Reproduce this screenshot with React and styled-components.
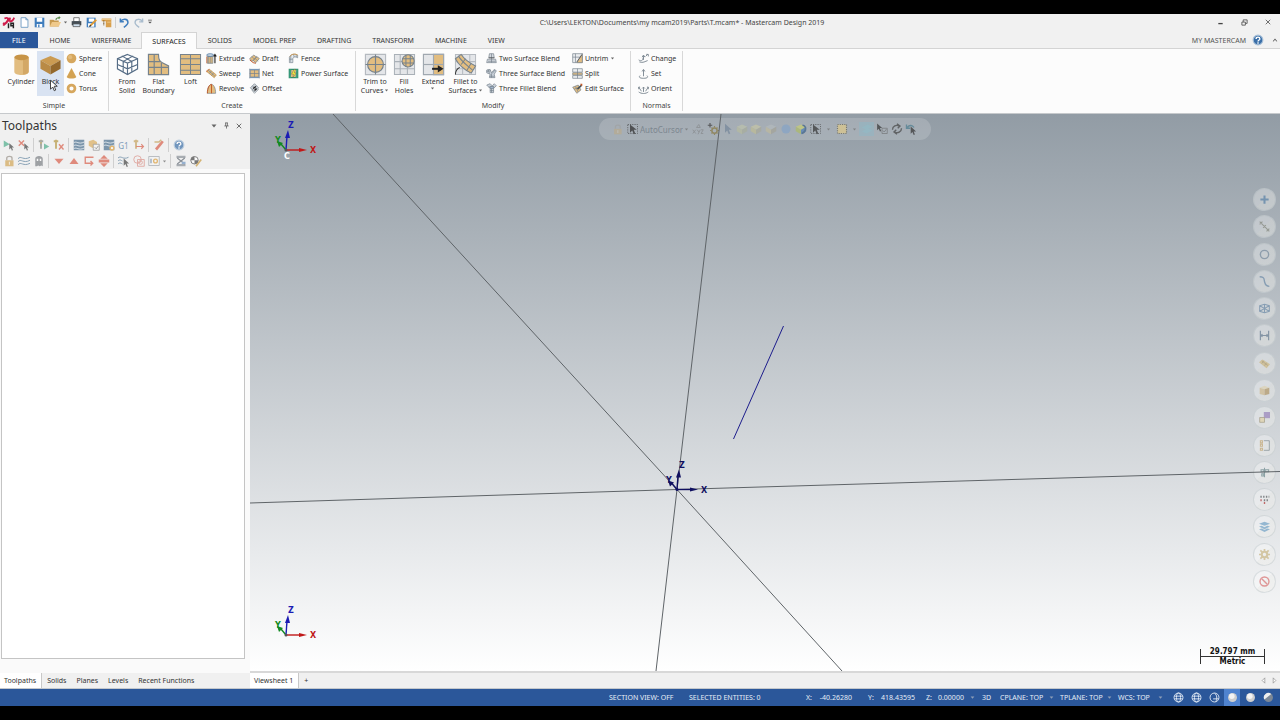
import React from "react";
import styled, { createGlobalStyle, css } from "styled-components";

const GlobalStyle = createGlobalStyle`
  *, *::before, *::after { box-sizing: border-box; }
  body { margin: 0; background: #000; }
  button, select { font: inherit; color: inherit; background: none; border: 0; padding: 0; margin: 0; }
  svg { display: block; flex: none; }
`;

/* ---------- icon drawings, all on a 16 x 16 grid ---------- */

const T = "#e2bd80";
const TD = "#bd8a3e";
const G = "#76828c";
const GL = "#e4e6e9";
const B = "#3f6c9c";

const cursorPath = "M2 1v12l3-3 2 5 2-1-2-5h4z";
const cubeSolid = (a, b, c) => (
  <>
    <path fill={a} d="M8 2l7 3-7 4-7-4z" />
    <path fill={b} d="M1 5l7 4v6l-7-4z" />
    <path fill={c} d="M15 5L8 9v6l7-4z" />
  </>
);

const glyphs = {
  app: (
    <>
      <path fill="none" stroke="#d01c4a" strokeWidth="2.2" d="M1 9c3 1 6-2 7-7M3 3c4-2 5 0 4 3s-5 4-5 6M9 7c3 0 5-2 6-5M10 2l-1 5" />
      <path stroke="#222" strokeWidth="1.8" fill="none" d="M8 9v6M14 15V9h-3v3h3" />
    </>
  ),
  page: <path fill="#fff" stroke="#6f9cc4" strokeWidth="1.3" d="M3 1h7l3 3v11H3zM10 1v3h3" />,
  save: (
    <>
      <path fill="#3f7dbd" d="M1 1h14v14H1z" />
      <path fill="#fff" d="M4 1h8v6H4zM4 10h8v5H4z" />
      <path fill="#3f7dbd" d="M6 11h2v4H6z" />
    </>
  ),
  open: (
    <>
      <path fill="#c79a50" d="M1 5h5l1 1h6v8H1z" />
      <path fill="#efc98b" d="M4 8h12l-3 6H1z" />
      <path fill="none" stroke="#5c8a4a" strokeWidth="1.5" d="M9 5c1-3 3-3 5-3l-1-1m1 1l-1 2" />
    </>
  ),
  print: (
    <>
      <path fill="#fff" stroke="#444" d="M4 1h8v6H4z" />
      <path fill="#444d55" d="M1 6h14v6H1z" />
      <path fill="#cfe0ef" stroke="#444" d="M3 10h10v4H3z" />
    </>
  ),
  saveAs: (
    <>
      <path fill="#3f7dbd" d="M1 1h13v14H1z" />
      <path fill="#fff" d="M4 2h8v5H4zM3 9h9v5H3z" />
      <path stroke="#e09a32" strokeWidth="2.6" d="M6 13l9-9" />
      <path stroke="#333" strokeWidth="2" d="M5 14l2-2" />
    </>
  ),
  zip: (
    <>
      <path fill="#d9a04c" d="M1 2h14v4H1zM7 6h8v9H7z" />
      <path fill="#f0cf98" d="M1 3h14v1H1zM9 7h5v1H9z" />
      <path stroke="#7b5a28" strokeDasharray="1 1" strokeWidth="2" d="M4 5v7" />
    </>
  ),
  undo: <path fill="none" stroke="#3f7dbd" strokeWidth="2.2" d="M2 2v5h5M2 7c3-5 11-5 11 1 0 3-3 5-6 7" />,
  redo: <path fill="none" stroke="#a9bccd" strokeWidth="2" d="M14 2v5H9M14 7C11 2 3 2 3 8c0 3 3 5 6 7" />,
  cylinder: (
    <>
      <path fill={T} d="M3 3v10c0 3 10 3 10 0V3z" />
      <path fill="#d3a866" d="M9 4v11c2 0 4-1 4-2V3z" />
      <ellipse cx="8" cy="3" rx="5" ry="2" fill="#c79447" />
    </>
  ),
  block: cubeSolid("#cb9b52", "#b98a45", "#94682c"),
  sphere: (
    <>
      <circle cx="8" cy="8" r="7" fill="#d6a75e" />
      <circle cx="6" cy="6" r="3" fill="#e3bb7c" />
    </>
  ),
  cone: <path fill="#d3a252" d="M8 0l7 13c-2 3-12 3-14 0z" />,
  torus: <circle cx="8" cy="8" r="5" fill="none" stroke="#d6a75e" strokeWidth="4" />,
  solid: (
    <g fill="#fff" stroke="#566d86" strokeWidth=".8">
      <path d="M8 1l7 3v7l-7 4-7-4V4z" />
      <path fill="none" d="M1 4l7 3 7-3M8 7v8M1 8l7 3 7-3M4 2l7 4v7M12 2L5 6v7" />
    </g>
  ),
  flat: (
    <g stroke={G} strokeWidth=".8">
      <path fill={T} d="M1 1h7c0 4 1 5 3 6l4 2v6H1z" />
      <path fill="none" d="M5 1v14M1 6h8M1 10h14M10 7v8" />
    </g>
  ),
  loft: (
    <g stroke={G} strokeWidth=".7">
      <path fill={T} d="M1 1h14v14H1z" />
      <path fill="none" d="M1 4h14M1 8h14M1 12h14M8 1v14" />
    </g>
  ),
  extrude: (
    <>
      <path fill={T} stroke={G} d="M2 5h8v10H2zM4 5v10M7 5v10" />
      <ellipse cx="6" cy="3" rx="5" ry="2" fill="#cbd7e2" stroke={B} />
      <path stroke="#222" strokeWidth="1.6" fill="none" d="M13 15V3M11 5l2-3 2 3" />
      <path stroke="#c45a28" d="M1 5v10" />
    </>
  ),
  sweep: (
    <>
      <path fill={T} stroke={TD} d="M1 5l4-3 10 8-3 4z" />
      <path stroke={G} d="M3 3l10 9M5 8l3-4M8 11l3-4" />
      <path fill="none" stroke="#c45a28" d="M1 6c0-3 2-4 4-4" />
    </>
  ),
  revolve: (
    <>
      <path fill={T} stroke={G} d="M2 15C2 7 5 2 8 2s6 5 6 13z" />
      <path fill="none" stroke="#c45a28" strokeWidth="1.4" d="M2 15C2 7 5 2 8 2v13" />
    </>
  ),
  draft: (
    <>
      <path fill={T} stroke={G} d="M1 8l6-5 4 3-6 6zM6 11l5-6 4 3-5 6z" />
      <path stroke={G} d="M4 5l4 4M9 8l4 4" />
      <path fill="none" stroke="#c45a28" strokeWidth="1.4" d="M1 10l5 4 4 1" />
    </>
  ),
  net: (
    <g stroke={G}>
      <path fill={T} d="M2 3h12v10H2z" />
      <path fill="none" d="M1 1v14M15 1v14M8 3v10M1 8h14" />
      <path stroke={B} d="M1 2h14M1 14h14" />
    </g>
  ),
  offset: (
    <>
      <path fill="#cfd4d9" stroke={G} d="M8 1l6 6-6 6-6-6z" />
      <path stroke={G} d="M5 4l6 6M11 4l-6 6M4 10l4 5 6-6" fill="none" />
      <path stroke="#222" strokeWidth="2" d="M6 8l4-3M8 11l3-3" />
    </>
  ),
  fence: (
    <>
      <path fill="#e7edf2" stroke={G} d="M2 14V6c2-5 9-5 12-3v4c-3-2-7-2-7 2v5z" />
      <path fill="none" stroke={G} d="M2 9h5M4 4v9M8 2l1 4M12 2v4" />
      <path fill="none" stroke="#d59a4a" strokeWidth="1.4" d="M3 5c2-4 8-4 11-2" />
    </>
  ),
  power: (
    <>
      <path fill={T} stroke="#2e8f6b" strokeWidth="2" d="M2 2h12v12H2z" />
      <path fill="#3d9f83" d="M2 2h3L4 14H2zM12 2h2v12h-3z" />
      <path fill="#f7ee3a" stroke="#555" strokeWidth=".6" d="M9 2L5 9h3l-1 5 5-7H9l2-5z" />
    </>
  ),
  trim: (
    <g stroke={G} strokeWidth=".8">
      <path fill={GL} stroke="#b5bac0" d="M1 1h14v14H1z" />
      <circle cx="8" cy="8" r="5.5" fill={T} />
      <path d="M8 1v14M1 8h14" />
    </g>
  ),
  fill: (
    <g stroke="#a9b0b7" strokeWidth=".7">
      <path fill={GL} d="M1 1h14v14H1z" />
      <path fill="none" d="M5 1v14M10 1v14M1 6h14M1 11h14" />
      <circle cx="10.5" cy="5.5" r="4.2" fill={T} stroke={G} />
      <path stroke={G} d="M9 1.500v8M12 1.500v8M6.500 4h8M6.500 7h8" />
    </g>
  ),
  extend: (
    <g stroke="#a0a8b0" strokeWidth=".8">
      <path fill={GL} d="M1 1h14v14H1z" />
      <path fill={T} d="M8 1h7v14H8z" />
      <path fill="none" d="M1 8h14" />
      <path stroke="#222" strokeWidth="1.4" d="M7 11h5" />
      <path fill="#222" stroke="none" d="M11 8.500l4 2.500-4 2.500z" />
    </g>
  ),
  fillet: (
    <g stroke={G} strokeWidth=".7">
      <path fill={GL} stroke="#b5bac0" d="M1 1h14v14H1zM6 1v14M11 1v14M1 6h14M1 11h14" />
      <path fill={T} d="M1 4l4-3c2 3 6 6 10 8l-3 5C8 12 3 8 1 4z" />
      <path fill="none" d="M3 2c3 5 7 7 10 10M5 8l3-4M9 12l3-5" />
      <path fill="none" stroke="#333" d="M1 15c0-3 1-4 3-5" />
    </g>
  ),
  blend2: (
    <g stroke={G} fill="#d5dae0">
      <path d="M5 1h6l1 6H4z" />
      <path d="M2 9h12l1 5H1zM8 1v13M3 12h11" />
      <path stroke="#444" d="M4 7h8" />
    </g>
  ),
  blend3: (
    <g stroke={G} fill="#c9d1da">
      <path d="M1 3l5-1 2 5 4-5 3 2-3 5 1 5H5l1-5-5-2z" />
      <path d="M3 2l2 6M8 8v6M13 3l-4 5M5 12h7M1 5l6-1" fill="none" />
    </g>
  ),
  fillet3: (
    <g stroke={G} fill="#c9d1da">
      <path d="M1 3l5-2 3 3 3-3 3 3-4 4v6H6V8z" />
      <path d="M8 4v10M6 11h5M4 6l7-1" fill="none" />
      <path fill="#9db2cc" d="M6 5h5v3H6z" />
    </g>
  ),
  untrim: (
    <g stroke={G}>
      <path fill="#eceef0" d="M1 1h14v13H1zM5 1v13M1 6h14" />
      <path fill={T} d="M15 1v13H7z" />
      <path stroke="#444" fill="none" d="M7 13l7-10" />
    </g>
  ),
  split: (
    <g stroke={G}>
      <path fill="#eceef0" d="M1 1h14v5H1z" />
      <path fill={T} d="M1 7h14v3H1z" />
      <path fill="#eceef0" d="M1 11h14v4H1zM8 1v14" />
    </g>
  ),
  edit: (
    <>
      <path fill={T} stroke={G} d="M1 6l8-3 4 7-6 5z" />
      <path stroke={G} d="M3 9l8-3M5 5l4 8" />
      <path stroke="#4a5157" strokeWidth="2.4" d="M8 9l6-6" />
      <path fill="#c45a28" d="M12 1h3v3h-2z" />
    </>
  ),
  nChange: (
    <path fill="none" stroke={G} strokeWidth="1.300" d="M1 10c4 3 7 0 6-3M2 13c5 2 9-1 12-2M8 10V4M6 6l2-3 2 3M11 5l3-3M12 2h3v3" />
  ),
  nSet: <path fill="none" stroke={G} strokeWidth="1.300" d="M8 12V3M6 5l2-3 2 3M3 11c-3 3 1 4 5 4s8-1 5-4" />,
  nOrient: (
    <path fill="none" stroke={G} strokeWidth="1.300" d="M8 13V6M6 8l2-2 2 2M1 6l4 6M1 9V6h2M15 6l-4 6M15 9V6h-2M1 13c4 3 10 3 14 0" />
  ),
  help: (
    <>
      <circle cx="8" cy="8" r="6.500" fill="#3a6fa8" stroke="#a8c0d8" strokeWidth="1.500" />
      <path fill="none" stroke="#fff" strokeWidth="1.800" d="M5.500 6.500c0-3 5-3 5 0 0 1.500-2.500 1.500-2.500 3.500M8 11v2" />
    </>
  ),
  selAll: (
    <>
      <path fill="#4fae8c" d="M1 2l8 5-8 4z" />
      <path fill="#444" transform="translate(7 5) scale(.7)" d={cursorPath} />
    </>
  ),
  selX: (
    <>
      <path stroke="#d9604c" strokeWidth="1.800" d="M1 2l7 7M8 2L1 9" />
      <path fill="#444" transform="translate(7 5) scale(.7)" d={cursorPath} />
    </>
  ),
  regen: (
    <>
      <path stroke="#b5963f" strokeWidth="2.500" d="M4 1v8" />
      <path stroke="#8a8f8a" strokeWidth="2.500" d="M4 6v7M1 3h6" />
      <path fill="#4fae8c" d="M8 6l7 4-7 4z" />
    </>
  ),
  regenX: (
    <>
      <path stroke="#b5963f" strokeWidth="2.500" d="M4 1v12M1 3h6" />
      <path stroke="#d9604c" strokeWidth="1.800" d="M8 7l6 7M14 7l-6 7" />
    </>
  ),
  waves: (
    <>
      <path fill="#4a6f8e" d="M1 1h14v14H1z" />
      <path fill="none" stroke="#dfe8ef" strokeWidth="1.200" d="M1 5c4-3 6 3 14-1M1 9c4-3 6 3 14-1M1 13c4-3 6 3 14-1" />
    </>
  ),
  verify: (
    <>
      <path fill="#dcae5f" d="M1 3l6-2 5 3v5l-6 3-5-3z" />
      <path fill="#f4f4f4" stroke="#777" d="M7 7h8v8H7z" />
      <path fill="none" stroke="#555" d="M9 11l2 2 3-4" />
    </>
  ),
  wavesGear: (
    <>
      <path fill="#4a6f8e" d="M1 1h14v14H1z" />
      <path fill="none" stroke="#dfe8ef" strokeWidth="1.200" d="M1 5c4-3 6 3 14-1M1 9c4-3 6 3 14-1" />
      <circle cx="12" cy="12" r="2.500" fill="#fff" stroke="#dc9f3e" strokeWidth="2" />
    </>
  ),
  toolArrow: (
    <>
      <path stroke="#c5a25c" strokeWidth="2.500" d="M4 1v12M1 3h6" />
      <path fill="none" stroke="#d9604c" strokeWidth="1.500" d="M4 10h10M11 7l3 3-3 3" />
    </>
  ),
  wand: (
    <>
      <path stroke="#d9604c" strokeWidth="3.600" d="M4 14l6-7 3-4" />
      <path fill="none" stroke="#c5a25c" strokeWidth="2" d="M2 4h6l3-3" />
    </>
  ),
  lock: (
    <>
      <path fill="#d3a757" d="M3 7h11v8H3z" />
      <path fill="none" stroke="#9a938a" strokeWidth="1.800" d="M5 7V4c0-3 7-3 7 0v3" />
      <path stroke="#fff" d="M8.500 9v4" />
    </>
  ),
  wavesLine: (
    <path fill="none" stroke="#5c7f9c" strokeWidth="1.300" d="M0 5c4-5 7 3 16-2M0 9c4-5 7 3 16-2M0 13c4-5 7 3 16-2" />
  ),
  ghost: (
    <>
      <path fill="#7c8085" d="M3 15V5c0-5 10-5 10 0v10l-2-1-2 1-2-1-2 1z" />
      <path fill="#fff" d="M5 5h2v3H5zM9 5h2v3H9z" />
    </>
  ),
  down: <path fill="#d9604c" d="M2 5h12l-6 7z" />,
  up: <path fill="#d9604c" d="M2 12h12L8 4z" />,
  insert: <path fill="none" stroke="#d9604c" strokeWidth="1.800" d="M14 3H3v8h10M10 8l3 3-3 3" />,
  updown: <path fill="#d9604c" d="M8 0l5 5H3zM1 6h14v4H1zM3 11h10l-5 5z" />,
  wavesSel: (
    <>
      <path fill="none" stroke="#5c7f9c" strokeWidth="1.300" d="M0 4c4-4 7 3 14-1M0 8c3-3 5 0 6 0M0 12c3-3 5 0 6 0" />
      <path fill="#444" transform="translate(6 4) scale(.8)" d={cursorPath} />
    </>
  ),
  overlap: (
    <g fill="none" stroke="#d98a80" strokeWidth="1.200">
      <circle cx="6" cy="6" r="5" />
      <path d="M6 6h9v9H6z" />
      <circle cx="10" cy="10" r="2.500" />
    </g>
  ),
  panel: (
    <>
      <path fill="#f4f4f4" stroke="#8c9298" d="M1 2h14v12H1z" />
      <path stroke="#56759a" strokeWidth="1.500" d="M4 5v6" />
      <circle cx="10" cy="8" r="2.500" fill="none" stroke="#dc9f3e" strokeWidth="1.800" />
    </>
  ),
  machine: (
    <>
      <path fill="#8b9199" d="M2 1h12v3H2zM2 12h12v3H2z" />
      <path fill="none" stroke="#5d6670" strokeWidth="1.500" d="M3 4l5 4-5 4M13 4L8 8l5 4" />
      <path fill="#6f96c2" d="M9 9h5v3H9z" />
    </>
  ),
  ballPen: (
    <>
      <circle cx="6" cy="7" r="5" fill="#fff" stroke="#444" strokeWidth="1.200" />
      <path fill="#444" d="M6 2v5H1c0-3 2-5 5-5zM6 7h5c0 3-2 5-5 5z" />
      <path stroke="#c9983c" strokeWidth="2.200" d="M8 15l7-9" />
    </>
  ),
  boxCursor: (
    <>
      <path fill="none" stroke="#333" strokeDasharray="1.500 1.500" d="M1 2h13v12H1z" />
      <path fill="#333" d="M4 2v11l3-3 2 5 2-1-2-5h4z" />
    </>
  ),
  xyz: <path fill="none" stroke="#777" strokeWidth="1.200" d="M1 9l4 5M5 9l-4 5M7 9l2 3M11 9l-3 6M12 9h3l-3 5h3M6 6l3-4 2 4z" />,
  gearPlus: (
    <>
      <path stroke="#444" strokeWidth="1.500" d="M4 0v6M1 3h6" />
      <circle cx="10" cy="10" r="3.500" fill="none" stroke="#8c7f4e" strokeWidth="2" />
      <path stroke="#8c7f4e" strokeWidth="1.500" d="M10 4v2M10 14v2M4 10h2M14 10h2M6 6l1 1M13 13l1 1M14 6l-1 1M6 14l1-1" />
    </>
  ),
  arrow: <path fill="#6d8096" transform="translate(2 0)" d={cursorPath} />,
  cubeY: cubeSolid("#cfd3a6", "#c2c58e", "#a9ad88"),
  cubeG: cubeSolid("#d3cfa0", "#c9c286", "#a8a78d"),
  cubeT: cubeSolid("#b9bfc0", "#c9be94", "#a39f8c"),
  ball: <circle cx="8" cy="8" r="6" fill="#7fa2ca" />,
  cubeB: (
    <>
      {cubeSolid("#c9cf74", "#aebc66", "#4f7fb5")}
      <path fill="none" stroke="#3b5f86" strokeWidth="2" d="M10 3c6 1 5 9-1 11" />
    </>
  ),
  square: <path fill="#d8c68f" stroke="#6b6b62" strokeDasharray="1.500 1.500" strokeWidth="1.500" d="M2 2h12v12H2z" />,
  planes: <path fill="#8fc0cb" d="M1 6l8-4 6 3-8 4zM1 11l8-4 6 3-8 4z" />,
  checkCursor: (
    <>
      <path fill="#333" transform="scale(.75)" d={cursorPath} />
      <path fill="none" stroke="#666" d="M8 7h7v7H8zM9 10l2 2 3-4" />
    </>
  ),
  cycle: (
    <path fill="none" stroke="#444" strokeWidth="1.800" d="M2 9c0-5 5-7 9-5M8 1l4 3-3 3M14 7c0 5-5 7-9 5M8 15l-4-3 3-3" />
  ),
  backCursor: (
    <>
      <path fill="none" stroke="#4b7d8f" strokeWidth="1.800" d="M3 6c3-4 7-3 9 0M2 2v5h5" />
      <path fill="#333" transform="translate(6 4) scale(.8)" d={cursorPath} />
    </>
  ),
  plus: <path stroke="#5d83a8" strokeWidth="3" d="M8 2v12M2 8h12" />,
  points: <path fill="none" stroke="#85897f" strokeWidth="1.500" d="M3 3l10 10M1 5l4-4M1 1l4 4M6 10l4-4M11 15l4-4M11 11l4 4" />,
  ring: <circle cx="8" cy="8" r="6" fill="none" stroke="#7a8d9f" strokeWidth="2" />,
  curve: <path fill="none" stroke="#6f8ca8" strokeWidth="2" d="M1 1c8 0 6 4 7 7s1 7 7 7" />,
  wireBox: <path fill="none" stroke="#6f8ca8" strokeWidth="1.500" d="M1 4l7-2 7 2v8l-7 2-7-2zM1 4l7 4 7-4M8 2v12M1 12l7-4 7 4" />,
  dim: <path fill="none" stroke="#6a7f94" strokeWidth="1.700" d="M2 1v14M14 1v14M2 8h12M5 6L3 8l2 2M11 6l2 2-2 2" />,
  strip: (
    <>
      <path fill="#cdb987" d="M0 6l5-4 11 7-5 6z" />
      <path stroke="#a08f68" d="M4 4l9 7M4 8l3-4M8 11l3-4" />
    </>
  ),
  cubeTan: (
    <>
      <path fill="#ddd2b4" d="M1 4l7-3 7 3-7 2z" />
      <path fill="#cfba90" d="M1 4l7 2v9l-7-2z" />
      <path fill="#b39a6c" d="M15 4L8 6v9l7-2z" />
    </>
  ),
  swap: (
    <>
      <path fill="#9b88bd" d="M7 0h9v9H7z" />
      <path fill="#e0d3ac" stroke="#8d8468" d="M1 8h7v7H1z" />
    </>
  ),
  list: (
    <>
      <path fill="none" stroke="#7d8a90" strokeWidth="1.300" d="M7 1h8v14H7" />
      <path fill="none" stroke="#c2a774" strokeWidth="1.500" d="M2 1h3v3H2zM2 6h3v3H2zM2 12h3v3H2z" />
    </>
  ),
  bars: <path fill="none" stroke="#6f8c90" strokeWidth="1.500" d="M8 1v14M3 4h4v3H3zM9 4h5v3H9zM4 10h3v3H4z" />,
  dots: (
    <>
      <path stroke="#5e6266" strokeWidth="3" strokeDasharray="2 2" d="M2 4h13M7 9h8" />
      <path stroke="#b54040" strokeWidth="3" strokeDasharray="2 2" d="M2 9h4M7 13h4" />
    </>
  ),
  layers: <path fill="#78a6c8" d="M0 4l8-3 8 3-8 3zM0 8l4-1 4 2 4-2 4 1-8 4zM0 12l4-1 4 2 4-2 4 1-8 4z" />,
  gear: (
    <>
      <circle cx="8" cy="8" r="4" fill="none" stroke="#cbb98b" strokeWidth="3" />
      <path stroke="#cbb98b" strokeWidth="2.500" d="M8 0v3M8 13v3M0 8h3M13 8h3M2 2l3 3M11 11l3 3M14 2l-3 3M2 14l3-3" />
    </>
  ),
  ban: (
    <g fill="none" stroke="#d97878" strokeWidth="2">
      <circle cx="8" cy="8" r="6.500" />
      <path d="M4 4l8 8" />
    </g>
  ),
  globe: (
    <g fill="none" stroke="#e5edf7" strokeWidth="1.300">
      <circle cx="8" cy="8" r="6.500" />
      <ellipse cx="8" cy="8" rx="3" ry="6.500" />
      <path d="M2 6h12M2 10h12" />
    </g>
  ),
  globeHalf: (
    <g fill="none" stroke="#e5edf7" strokeWidth="1.300">
      <circle cx="8" cy="8" r="6.500" />
      <path d="M8 2c4 2 4 8 2 12M6 10h8" />
    </g>
  ),
  shaded: (
    <>
      <circle cx="8" cy="8" r="6.500" fill="#cfcfcf" />
      <circle cx="7" cy="6" r="4" fill="#f4f4f4" />
    </>
  ),
  shadedHalf: (
    <>
      <circle cx="8" cy="8" r="6.500" fill="#7b8796" />
      <path fill="#eee" d="M2 11A6.500 6.500 0 0 1 12 3z" />
    </>
  ),
  caret: <path fill="#666" d="M3 5h10l-5 6z" />,
  caretDim: <path fill="#8f9fb8" d="M2 5h12l-6 7z" />,
  caretUp: <path fill="#555" d="M2 11l6-7 6 7-2 1-4-5-4 5z" />,
  more: <path fill="#555" d="M3 2h10v2H3zM3 7h10l-5 5z" />,
  pin: <path fill="none" stroke="#444" strokeWidth="1.500" d="M5 2h6M6 2v7M10 2v7M3 9h10M8 9v6" />,
  close: <path fill="none" stroke="#444" strokeWidth="2" d="M2 2l12 12M14 2L2 14" />,
  minimize: <path fill="#444" d="M3 9h10v3H3z" />,
  restore: <path fill="none" stroke="#555" strokeWidth="2" d="M2 7h8v7H2zM5 7V2h9v8h-4" />,
  left: <path fill="#fff" stroke="#888" strokeWidth="1.500" d="M11 2v12L5 8z" />,
  right: <path fill="#fff" stroke="#888" strokeWidth="1.500" d="M5 2v12l6-6z" />,
};

const Icon = ({ name, size = 11 }) => (
  <svg width={size} height={size} viewBox="0 0 16 16" aria-hidden="true">
    {glyphs[name]}
  </svg>
);

/* ---------- window frame ---------- */

const Window = styled.div`
  min-height: 100vh;
  padding: 14px 0;
  display: flex;
  flex-direction: column;
  background: #000;
  color: #333;
  font: 7px/9px "Noto Sans", "Open Sans", sans-serif;
`;

const TitleBar = styled.header`
  height: 18px;
  padding-bottom: 2px;
  display: grid;
  grid-template-columns: 1fr auto 1fr;
  align-items: center;
  background: #f1f1f1;
`;

const QuickAccess = styled.div`
  display: flex;
  align-items: center;
`;

const IconButton = styled.button`
  width: ${(p) => p.$w || 15}px;
  height: 14px;
  display: flex;
  align-items: center;
  justify-content: center;
`;

const Divider = styled.span`
  width: 1px;
  height: ${(p) => p.$h || 12}px;
  margin: 0 ${(p) => p.$gap || 2}px;
  background: #cfcfcf;
`;

const DocTitle = styled.h1`
  margin: 0 0 0 84px;
  font: inherit;
  color: #444;
  white-space: nowrap;
`;

const WindowButtons = styled.div`
  display: flex;
  justify-content: flex-end;
`;

const MenuBar = styled.nav`
  height: 17px;
  display: flex;
  align-items: stretch;
  background: #f1f1f1;
  border-bottom: 1px solid #d4d4d4;
`;

const MenuTab = styled.button`
  padding: 0 10px 0 11px;
  color: #333;
  ${(p) => p.$file && css`
    padding: 0 12px;
    margin-right: 1px;
    background: #2b579a;
    color: #fff;
  `}
  ${(p) => p.$active && css`
    margin-bottom: -1px;
    background: #fcfcfc;
    border: 1px solid #d4d4d4;
    border-bottom: 0;
    padding: 0 10px;
    color: #222;
  `}
`;

const Account = styled.div`
  margin-left: auto;
  display: flex;
  align-items: center;
  gap: 5px;
  padding-right: 1px;
  color: #555;
`;

/* ---------- ribbon ---------- */

const Ribbon = styled.div`
  height: 65px;
  padding: 2px 0;
  display: flex;
  background: #fcfcfc;
  border-bottom: 1px solid #c6c9cc;
`;

const Group = styled.section`
  display: flex;
  flex-direction: column;
  justify-content: space-between;
  padding: 0 5px;
  border-right: 1px solid #d8d8d8;
`;

const GroupBody = styled.div`
  display: flex;
`;

const GroupLabel = styled.h2`
  margin: 0 0 1px;
  font: inherit;
  color: #444;
  text-align: center;
`;

const BigButton = styled.button`
  width: ${(p) => p.$w}px;
  height: 45px;
  display: flex;
  flex-direction: column;
  align-items: center;
  gap: 1px;
  padding-top: 2px;
  white-space: nowrap;
  position: relative;
  background: ${(p) => (p.$hover ? "#d9e3f2" : "none")};
`;

const BigLabel = styled.span`
  display: block;
  text-align: center;
`;

const LabelLine = styled.span`
  display: flex;
  justify-content: center;
  align-items: center;
  gap: 1px;
`;

const SmallColumn = styled.div`
  width: ${(p) => p.$w}px;
  padding-left: 2px;
  display: flex;
  flex-direction: column;
`;

const SmallButton = styled.button`
  height: 15px;
  display: flex;
  align-items: center;
  gap: 2px;
  white-space: nowrap;
`;

const Pointer = styled.svg`
  position: absolute;
  left: 12px;
  top: 28px;
`;

const Big = ({ icon, lines, w, caret, hover, children }) => (
  <BigButton $w={w} $hover={hover}>
    <Icon name={icon} size={23} />
    <BigLabel>
      {lines.map((line, i) => (
        <LabelLine key={line}>
          {line}
          {caret && i === 1 && <Icon name="caret" size={5} />}
        </LabelLine>
      ))}
      {caret && lines.length === 1 && (
        <LabelLine>
          <Icon name="caret" size={5} />
        </LabelLine>
      )}
    </BigLabel>
    {children}
  </BigButton>
);

const Column = ({ w, items }) => (
  <SmallColumn $w={w}>
    {items.map(([icon, text, caret]) => (
      <SmallButton key={text}>
        <Icon name={icon} size={11} />
        {text}
        {caret && <Icon name="caret" size={5} />}
      </SmallButton>
    ))}
  </SmallColumn>
);

/* ---------- workspace ---------- */

const Workspace = styled.main`
  flex: 1;
  display: grid;
  grid-template-columns: 250px minmax(0, 1fr);
  background: #f0f0f0;
`;

const SidePanel = styled.aside`
  display: flex;
  flex-direction: column;
  background: #fafafa;
`;

const PanelHead = styled.div`
  height: 23px;
  padding: 0 5px 0 2px;
  display: flex;
  align-items: center;
  background: #f0f0f0;
`;

const PanelTitle = styled.h2`
  margin: 0 auto 0 0;
  font-size: 12px;
  line-height: 16px;
  font-weight: 400;
  color: #333;
`;

const ToolRow = styled.div`
  height: 16px;
  padding-left: 1px;
  display: flex;
  align-items: center;
  background: #f0f0f0;

  svg { opacity: 0.7; }
`;

const OperationList = styled.div`
  flex: 1;
  margin: 4px 5px 14px 1px;
  background: #fff;
  border: 1px solid #c4c4c4;
`;

const TabStrip = styled.div`
  height: 16px;
  display: flex;
  background: #f0f0f0;
  border-bottom: 1px solid #c4c8cc;
`;

const BottomTab = styled.button`
  padding: 0 5px;
  white-space: nowrap;
  color: #333;
  ${(p) => p.$active && css`
    padding: 0 5px 0 4px;
    background: #fff;
    border-right: 1px solid #c8c8c8;
  `}
`;

const ViewArea = styled.section`
  display: flex;
  flex-direction: column;
`;

const Viewport = styled.div`
  flex: 1;
  position: relative;
  overflow: hidden;
  background: linear-gradient(#929ca5, #fff);
`;

const Scene = styled.svg`
  position: absolute;
  inset: 0;
  width: 100%;
  height: 100%;
`;

const SelectionBar = styled.div`
  position: absolute;
  top: 4px;
  left: 50%;
  transform: translateX(-50%);
  width: 332px;
  height: 22px;
  padding: 0 12px 0 11px;
  display: flex;
  align-items: center;
  border-radius: 11px;
  background: rgba(255, 255, 255, 0.16);
`;

const CursorMode = styled.select`
  appearance: none;
  width: 43px;
  color: #7c868f;
  font-size: 8px;
`;

const FilterButton = styled(IconButton)`
  svg { opacity: ${(p) => p.$fade || 0.6}; }
  background: ${(p) => (p.$on ? "rgba(140, 185, 200, .45)" : "none")};
`;

const FilterBar = styled.div`
  position: absolute;
  right: 4px;
  top: 74px;
  height: 405px;
  display: flex;
  flex-direction: column;
  justify-content: space-between;
`;

const RoundButton = styled.button`
  width: 23px;
  height: 23px;
  display: flex;
  align-items: center;
  justify-content: center;
  border-radius: 50%;
  border: 1px solid rgba(170, 180, 185, 0.35);
  background: linear-gradient(135deg, rgba(255, 255, 255, 0.32) 50%, rgba(240, 240, 236, 0.42) 50%);

  svg { opacity: 0.75; }
`;

const ScaleBar = styled.div`
  position: absolute;
  right: 15px;
  bottom: 5px;
  width: 65px;
  color: #111;
  font: bold 8px/9px "DejaVu Sans Condensed", "DejaVu Sans", sans-serif;
  text-align: center;
`;

const ScaleValue = styled.div`
  position: relative;
  border-bottom: 1px solid #333;

  &::before, &::after {
    content: "";
    position: absolute;
    top: 2px;
    height: 15px;
    border-left: 1px solid #333;
  }
  &::before { left: 0; }
  &::after { right: 0; }
`;

const SheetStrip = styled(TabStrip)`
  height: 18px;
  border-top: 2px solid #d8d8d8;
`;

const SheetScroll = styled.div`
  margin-left: auto;
  display: flex;
  align-items: center;
`;

const Axes = ({ x, y, colors }) => (
  <g transform={`translate(${x} ${y})`} fontFamily="DejaVu Sans, sans-serif" fontWeight="bold" fontSize="8">
    <g stroke={colors[0]} fill={colors[0]}>
      <path strokeWidth="1.400" d="M0 0h14" />
      <path stroke="none" d="M13-2l8 2-8 2z" />
      <text stroke="none" x="24" y="3">X</text>
    </g>
    <g stroke={colors[1]} fill={colors[1]}>
      <path strokeWidth="1.400" d="M0 0l-5-6" />
      <path stroke="none" d="M-9-9l6 2-4 4z" />
      <text stroke="none" x="-11" y="-7">Y</text>
    </g>
    <g stroke={colors[2]} fill={colors[2]}>
      <path strokeWidth="1.400" d="M0 0l1-14" />
      <path stroke="none" d="M-1-12L2-20l2 8z" />
      <text stroke="none" x="2" y="-22">Z</text>
    </g>
    <circle r="1.500" fill={colors[3]} />
  </g>
);

/* ---------- status bar ---------- */

const StatusBar = styled.footer`
  height: 17px;
  padding-right: 4px;
  display: flex;
  align-items: center;
  justify-content: flex-end;
  background: #2b579a;
  color: #e6edf6;
`;

const StatusCell = styled.button`
  width: ${(p) => p.$w}px;
  height: 17px;
  display: flex;
  align-items: center;
  justify-content: space-between;
  padding-right: ${(p) => p.$pad || 0}px;
  text-align: left;
  white-space: nowrap;
`;

const ShadeButton = styled.button`
  width: 16px;
  height: 17px;
  margin-left: 2px;
  display: flex;
  align-items: center;
  justify-content: center;
  background: ${(p) => (p.$on ? "#4f83cf" : "none")};
`;

const menus = ["HOME", "WIREFRAME", "SURFACES", "SOLIDS", "MODEL PREP", "DRAFTING", "TRANSFORM", "MACHINE", "VIEW"];

const rowOne = ["selAll", "selX", "|", "regen", "regenX", "|", "waves", "verify", "wavesGear", "G1", "toolArrow", "|", "wand", "|", "help"];
const rowTwo = ["lock", "wavesLine", "ghost", "|", "down", "up", "insert", "updown", "|", "wavesSel", "overlap", "panel", "caret", "|", "machine", "ballPen"];

const G1Text = styled.span`
  color: #7d9cbb;
  font-size: 8px;
`;

const Tools = ({ items }) => (
  <ToolRow>
    {items.map((name, i) => {
      if (name === "|") return <Divider key={i} $h={14} />;
      if (name === "G1") return <IconButton key={i}><G1Text>G1</G1Text></IconButton>;
      return (
        <IconButton key={i} aria-label={name} $w={name === "caret" ? 7 : 15}>
          <Icon name={name} size={name === "caret" ? 5 : 12} />
        </IconButton>
      );
    })}
  </ToolRow>
);

const filters = ["plus", "points", "ring", "curve", "wireBox", "dim", "strip", "cubeTan", "swap", "list", "bars", "dots", "layers", "gear", "ban"];

const selection = [
  ["xyz", 15, 0.5], ["gearPlus", 15, 0.8], ["arrow", 15, 0.6], ["cubeY", 14, 0.4], ["cubeG", 14, 0.5], ["cubeT", 15, 0.5],
  ["ball", 15, 0.6], ["cubeB", 15, 0.7], ["boxCursor", 16, 0.7], ["caret", 9, 0.6], ["square", 17, 0.8], ["caret", 9, 0.6],
  ["planes", 15, 0.4, true], ["checkCursor", 15, 0.7], ["cycle", 15, 0.7], ["backCursor", 14, 0.7],
];

export default function App() {
  return (
    <Window>
      <GlobalStyle />
      <TitleBar>
        <QuickAccess>
          <IconButton aria-label="Mastercam" $w={17}><Icon name="app" size={13} /></IconButton>
          <IconButton aria-label="New"><Icon name="page" /></IconButton>
          <IconButton aria-label="Save"><Icon name="save" /></IconButton>
          <IconButton aria-label="Open"><Icon name="open" size={12} /></IconButton>
          <IconButton aria-label="Recent files" $w={7}><Icon name="caret" size={5} /></IconButton>
          <IconButton aria-label="Print"><Icon name="print" /></IconButton>
          <IconButton aria-label="Save as"><Icon name="saveAs" /></IconButton>
          <IconButton aria-label="Zip2Go"><Icon name="zip" /></IconButton>
          <Divider $h={11} $gap={1} />
          <IconButton aria-label="Undo" $w={14}><Icon name="undo" /></IconButton>
          <IconButton aria-label="Redo" $w={14}><Icon name="redo" /></IconButton>
          <IconButton aria-label="Customize toolbar" $w={9}><Icon name="more" size={6} /></IconButton>
        </QuickAccess>
        <DocTitle>C:\Users\LEKTON\Documents\my mcam2019\Parts\T.mcam* - Mastercam Design 2019</DocTitle>
        <WindowButtons>
          <IconButton aria-label="Minimize" $w={24}><Icon name="minimize" size={7} /></IconButton>
          <IconButton aria-label="Restore" $w={24}><Icon name="restore" size={7} /></IconButton>
          <IconButton aria-label="Close" $w={24}><Icon name="close" size={6} /></IconButton>
        </WindowButtons>
      </TitleBar>

      <MenuBar>
        <MenuTab $file>FILE</MenuTab>
        {menus.map((m) => <MenuTab key={m} $active={m === "SURFACES"}>{m}</MenuTab>)}
        <Account>
          MY MASTERCAM
          <IconButton aria-label="Help" $w={14}><Icon name="help" size={12} /></IconButton>
          <IconButton aria-label="Collapse ribbon" $w={9}><Icon name="caretUp" size={6} /></IconButton>
        </Account>
      </MenuBar>

      <Ribbon>
        <Group>
          <GroupBody>
            <Big icon="cylinder" lines={["Cylinder"]} w={32} />
            <Big icon="block" lines={["Block"]} w={27} hover>
              <Pointer width="9" height="13" viewBox="0 0 12 16">
                <path fill="#fff" stroke="#333" strokeWidth="1.200" d={cursorPath} />
              </Pointer>
            </Big>
            <Column w={39} items={[["sphere", "Sphere"], ["cone", "Cone"], ["torus", "Torus"]]} />
          </GroupBody>
          <GroupLabel>Simple</GroupLabel>
        </Group>
        <Group>
          <GroupBody>
            <Big icon="solid" lines={["From", "Solid"]} w={26} />
            <Big icon="flat" lines={["Flat", "Boundary"]} w={37} />
            <Big icon="loft" lines={["Loft"]} w={27} />
            <Column w={43} items={[["extrude", "Extrude"], ["sweep", "Sweep"], ["revolve", "Revolve"]]} />
            <Column w={39} items={[["draft", "Draft"], ["net", "Net"], ["offset", "Offset"]]} />
            <Column w={64} items={[["fence", "Fence"], ["power", "Power Surface"]]} />
          </GroupBody>
          <GroupLabel>Create</GroupLabel>
        </Group>
        <Group>
          <GroupBody>
            <Big icon="trim" lines={["Trim to", "Curves"]} w={28} caret />
            <Big icon="fill" lines={["Fill", "Holes"]} w={30} />
            <Big icon="extend" lines={["Extend"]} w={28} caret />
            <Big icon="fillet" lines={["Fillet to", "Surfaces"]} w={37} caret />
            <Column w={86} items={[["blend2", "Two Surface Blend"], ["blend3", "Three Surface Blend"], ["fillet3", "Three Fillet Blend"]]} />
            <Column w={55} items={[["untrim", "Untrim", true], ["split", "Split"], ["edit", "Edit Surface"]]} />
          </GroupBody>
          <GroupLabel>Modify</GroupLabel>
        </Group>
        <Group>
          <GroupBody>
            <Column w={41} items={[["nChange", "Change"], ["nSet", "Set"], ["nOrient", "Orient"]]} />
          </GroupBody>
          <GroupLabel>Normals</GroupLabel>
        </Group>
      </Ribbon>

      <Workspace>
        <SidePanel>
          <PanelHead>
            <PanelTitle>Toolpaths</PanelTitle>
            <IconButton aria-label="Panel menu" $w={13}><Icon name="caret" size={8} /></IconButton>
            <IconButton aria-label="Pin panel" $w={12}><Icon name="pin" size={7} /></IconButton>
            <IconButton aria-label="Close panel" $w={13}><Icon name="close" size={6} /></IconButton>
          </PanelHead>
          <Tools items={rowOne} />
          <Tools items={rowTwo} />
          <OperationList role="tree" aria-label="Toolpaths" />
          <TabStrip>
            {["Toolpaths", "Solids", "Planes", "Levels", "Recent Functions"].map((t, i) => (
              <BottomTab key={t} $active={i === 0}>{t}</BottomTab>
            ))}
          </TabStrip>
        </SidePanel>

        <ViewArea>
          <Viewport>
            <SelectionBar>
              <FilterButton aria-label="Lock" $fade={0.3}><Icon name="lock" /></FilterButton>
              <FilterButton aria-label="Cursor" $fade={0.75}><Icon name="boxCursor" size={12} /></FilterButton>
              <CursorMode aria-label="Cursor mode" defaultValue="AutoCursor">
                <option>AutoCursor</option>
              </CursorMode>
              <FilterButton aria-label="Cursor options" $w={7}><Icon name="caret" size={5} /></FilterButton>
              {selection.map(([name, w, fade, on], i) => (
                <FilterButton key={i} aria-label={name} $w={w} $fade={fade} $on={on}>
                  <Icon name={name} size={name === "caret" ? 5 : 12} />
                </FilterButton>
              ))}
            </SelectionBar>
            <FilterBar>
              {filters.map((f) => <RoundButton key={f} aria-label={f}><Icon name={f} size={11} /></RoundButton>)}
            </FilterBar>
            <Scene viewBox="0 0 1030 557" preserveAspectRatio="xMidYMid slice" pointerEvents="none">
              <g stroke="#5f6468" strokeWidth="1" fill="none">
                <path d="M83 0L427 375.500 592 557" />
                <path d="M471 0L427 375.500 406 557" />
                <path d="M0 389L427 375.500 1030 357.500" />
              </g>
              <path stroke="#1d1d8c" d="M533.500 212L483.500 325" />
              <Axes x={427} y={375.5} colors={["#101060", "#101060", "#101060", "#101060"]} />
              <Axes x={36} y={36} colors={["#c01818", "#128a22", "#1c1cb4", "#555"]} />
              <text x="34" y="45" fill="#fff" fontFamily="DejaVu Sans, sans-serif" fontSize="8" fontWeight="bold">C</text>
              <Axes x={36} y={521} colors={["#c01818", "#128a22", "#1c1cb4", "#555"]} />
            </Scene>
            <ScaleBar>
              <ScaleValue>29.797 mm</ScaleValue>
              Metric
            </ScaleBar>
          </Viewport>
          <SheetStrip>
            <BottomTab $active>Viewsheet 1</BottomTab>
            <BottomTab aria-label="Add viewsheet">+</BottomTab>
            <SheetScroll>
              <IconButton aria-label="Previous sheet" $w={9}><Icon name="left" size={7} /></IconButton>
              <IconButton aria-label="Next sheet" $w={12}><Icon name="right" size={7} /></IconButton>
            </SheetScroll>
          </SheetStrip>
        </ViewArea>
      </Workspace>

      <StatusBar>
        <StatusCell $w={80}>SECTION VIEW: OFF</StatusCell>
        <StatusCell $w={117}>SELECTED ENTITIES: 0</StatusCell>
        <StatusCell $w={62} $pad={16}><span>X:</span><span>-40.26280</span></StatusCell>
        <StatusCell $w={58} $pad={11}><span>Y:</span><span>418.43595</span></StatusCell>
        <StatusCell $w={56} $pad={7}><span>Z:</span><span>0.00000</span><Icon name="caretDim" size={5} /></StatusCell>
        <StatusCell $w={18}>3D</StatusCell>
        <StatusCell $w={60} $pad={6}>CPLANE: TOP<Icon name="caretDim" size={5} /></StatusCell>
        <StatusCell $w={58} $pad={6}>TPLANE: TOP<Icon name="caretDim" size={5} /></StatusCell>
        <StatusCell $w={50} $pad={5}>WCS: TOP<Icon name="caretDim" size={5} /></StatusCell>
        {["globe", "globe", "globeHalf", "shaded", "shaded", "shadedHalf"].map((g, i) => (
          <ShadeButton key={i} aria-label={`Shading mode ${i + 1}`} $on={i === 3}><Icon name={g} size={11} /></ShadeButton>
        ))}
      </StatusBar>
    </Window>
  );
}
